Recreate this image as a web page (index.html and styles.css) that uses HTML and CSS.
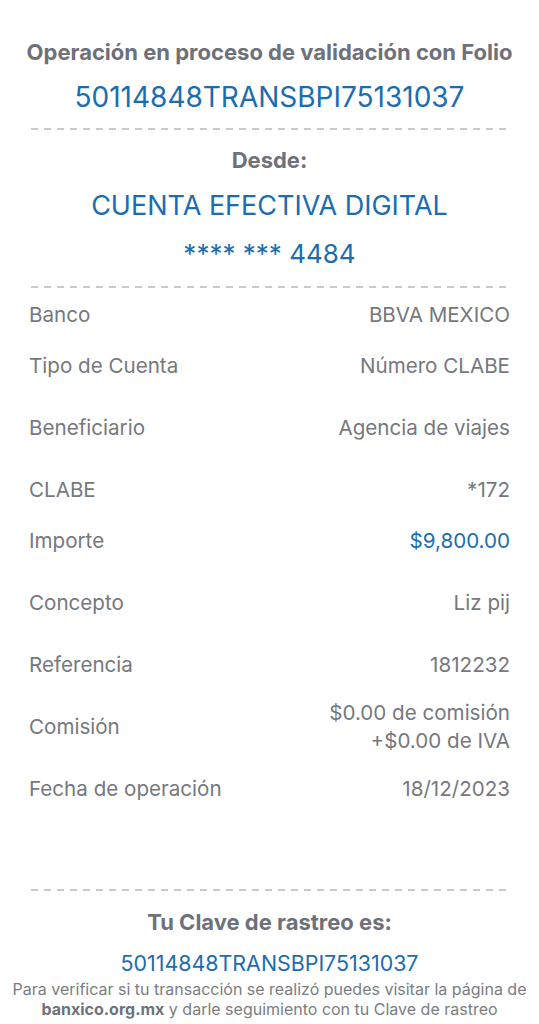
FILE: index.html
```html
<!DOCTYPE html>
<html lang="es">
<head>
    <meta charset="UTF-8">
    <meta name="viewport" content="width=device-width, initial-scale=1.0">
    <title>Comprobante de transferencia</title>
    <link rel="stylesheet" href="styles.css">
</head>
<body>

    <div class="receipt">
        <div class="header">
            <h2 class="title">Operación en proceso de validación con Folio</h2>
            <div class="folio">50114848TRANSBPI75131037</div>
        </div>

        <div class="dashed"></div>

        <div class="origin">
            <h3 class="subtitle">Desde:</h3>
            <div class="account-name">CUENTA EFECTIVA DIGITAL</div>
            <div class="account-number">**** *** 4484</div>
        </div>

        <div class="dashed"></div>

        <div class="details">
            <div class="row first">
                <span class="label">Banco</span>
                <span class="value">BBVA MEXICO</span>
            </div>
            <div class="row tight">
                <span class="label">Tipo de Cuenta</span>
                <span class="value">Número CLABE</span>
            </div>
            <div class="row">
                <span class="label">Beneficiario</span>
                <span class="value">Agencia de viajes</span>
            </div>
            <div class="row">
                <span class="label">CLABE</span>
                <span class="value">*172</span>
            </div>
            <div class="row tight">
                <span class="label">Importe</span>
                <span class="value amount">$9,800.00</span>
            </div>
            <div class="row">
                <span class="label">Concepto</span>
                <span class="value">Liz pij</span>
            </div>
            <div class="row">
                <span class="label">Referencia</span>
                <span class="value">1812232</span>
            </div>
            <div class="row multi">
                <span class="label">Comisión</span>
                <span class="value">$0.00 de comisión<br>+$0.00 de IVA</span>
            </div>
            <div class="row">
                <span class="label">Fecha de operación</span>
                <span class="value">18/12/2023</span>
            </div>
        </div>

        <div class="dashed footer-line"></div>

        <div class="tracking">
            <h3 class="subtitle">Tu Clave de rastreo es:</h3>
            <div class="tracking-code">50114848TRANSBPI75131037</div>
            <p class="note">Para verificar si tu transacción se realizó puedes visitar la página de <strong>banxico.org.mx</strong> y darle seguimiento con tu Clave de rastreo</p>
        </div>
    </div>

</body>
</html>
```

FILE: styles.css
```css
body {
    font-family: Inter, "Noto Sans", sans-serif;
    background-color: #ffffff;
    margin: 0;
    color: #76787d;
}

.receipt {
    width: 539px;
    padding-top: 37px;
    box-sizing: border-box;
}

.header,
.origin,
.tracking {
    text-align: center;
}

.title {
    margin: 0;
    font-size: 22px;
    line-height: 30px;
    font-weight: 700;
    color: #6e7179;
}

.folio {
    margin-top: 10px;
    font-size: 28px;
    line-height: 40px;
    color: #1a6db0;
}

.dashed {
    height: 2px;
    margin: 11px 31px 0 31px;
    background-image: linear-gradient(to right, #c9c9cb 7px, transparent 7px);
    background-size: 13px 2px;
    background-repeat: repeat-x;
}

.origin {
    margin-top: 15px;
}

.subtitle {
    margin: 0;
    font-size: 22px;
    line-height: 30px;
    font-weight: 700;
    color: #6e7179;
}

.account-name {
    margin-top: 11px;
    font-size: 27px;
    line-height: 40px;
    color: #1a6db0;
}

.account-number {
    margin-top: 8px;
    margin-bottom: 12px;
    font-size: 26px;
    line-height: 40px;
    color: #1a6db0;
}

.details {
    padding: 0 29px 0 29px;
}

.row {
    display: flex;
    justify-content: space-between;
    align-items: center;
    margin-top: 34px;
    font-size: 20.6px;
    line-height: 28px;
}

.row.first {
    margin-top: 13px;
}

.row.tight {
    margin-top: 23px;
}

.row.multi {
    margin-top: 20px;
}

.row.multi + .row {
    margin-top: 20px;
}

.label {
    color: #76787d;
}

.value {
    text-align: right;
    color: #76787d;
}

.value.amount {
    color: #1a6db0;
}

.footer-line {
    margin-top: 86px;
}

.tracking {
    margin-top: 16px;
}

.tracking-code {
    margin-top: 12px;
    font-size: 21.4px;
    line-height: 28px;
    color: #1a6db0;
}

.note {
    margin: 2px 0 0 0;
    font-size: 16px;
    line-height: 20px;
    color: #7b7d82;
}

.note strong {
    color: #6e7179;
}
```
